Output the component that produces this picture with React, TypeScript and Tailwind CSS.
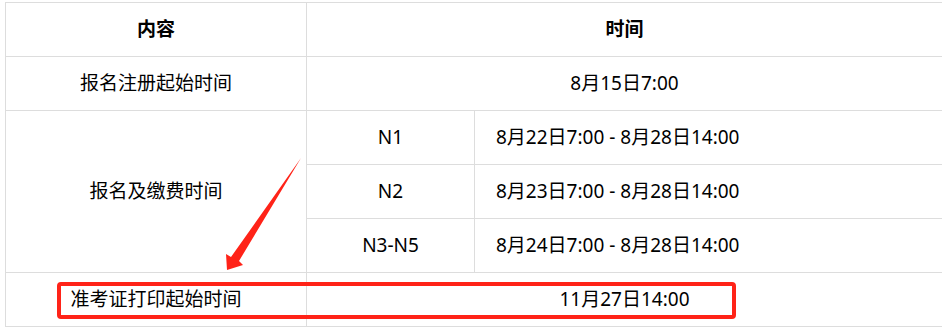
import React from "react";

const font = { fontFamily: '"Noto Sans", "Noto Sans CJK SC", sans-serif' };

const cell = "border border-[#dddddd] text-center align-middle";
const dateCell = "border border-[#dddddd] text-left align-middle pl-[21px]";

export default function App() {
  return (
    <div className="relative w-[942px] h-[331px] bg-white text-[19px] text-black" style={font}>
      <div className="pt-[2px] pl-[5px]">
        <table className="table-fixed border-collapse w-[937px]">
          <colgroup>
            <col className="w-[301px]" />
            <col className="w-[168px]" />
            <col className="w-[468px]" />
          </colgroup>
          <tbody>
            <tr className="h-[54px]">
              <td className={`${cell} font-bold`}>内容</td>
              <td className={`${cell} font-bold`} colSpan={2}>时间</td>
            </tr>
            <tr className="h-[54px]">
              <td className={cell}>报名注册起始时间</td>
              <td className={cell} colSpan={2}>8月15日7:00</td>
            </tr>
            <tr className="h-[54px]">
              <td className={cell} rowSpan={3}>报名及缴费时间</td>
              <td className={cell}>N1</td>
              <td className={dateCell}>8月22日7:00 - 8月28日14:00</td>
            </tr>
            <tr className="h-[54px]">
              <td className={cell}>N2</td>
              <td className={dateCell}>8月23日7:00 - 8月28日14:00</td>
            </tr>
            <tr className="h-[54px]">
              <td className={cell}>N3-N5</td>
              <td className={dateCell}>8月24日7:00 - 8月28日14:00</td>
            </tr>
            <tr className="h-[54px]">
              <td className={cell}>准考证打印起始时间</td>
              <td className={cell} colSpan={2}>11月27日14:00</td>
            </tr>
          </tbody>
        </table>
      </div>

      {/* red highlight box */}
      <div className="absolute left-[57px] top-[282px] w-[679px] h-[37px] border-4 border-[#ff2318] rounded-[4px]" />

      {/* arrow */}
      <svg className="absolute left-0 top-0 pointer-events-none" width="942" height="331">
        <polygon
          points="301,158 239,261 243,265 227,270 226,254 231,257"
          fill="#ff2318"
        />
      </svg>
    </div>
  );
}
